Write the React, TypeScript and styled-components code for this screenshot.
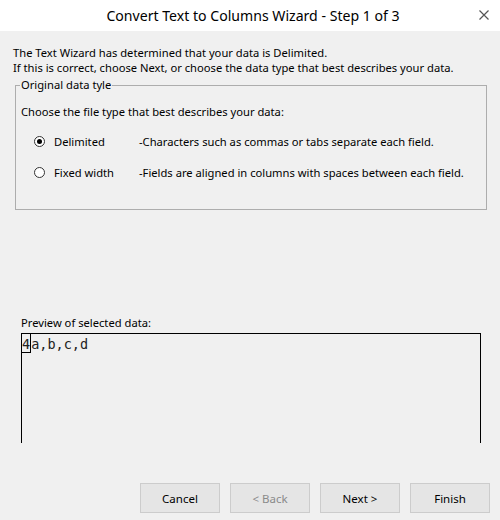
import React from 'react'
import styled, { createGlobalStyle } from 'styled-components'

const GlobalStyle = createGlobalStyle`
  body {
    margin: 0;
    background: #f0f0f0;
    font-family: 'Noto Sans', 'Open Sans', sans-serif;
  }
`

const Window = styled.div`
  width: 500px;
  height: 520px;
  display: flex;
  flex-direction: column;
  background: #f0f0f0;
  color: #000;
  font-size: 11.2px;
  overflow: hidden;
`

const TitleBar = styled.div`
  height: 31px;
  background: #fff;
  position: relative;
  display: flex;
  align-items: center;
  justify-content: center;
  padding-left: 6px;
  font-size: 14.1px;
  color: #000;
  .close {
    position: absolute;
    right: 11px;
    top: 10px;
    width: 10px;
    height: 10px;
  }
`

const Body = styled.div`
  flex: 1;
  display: flex;
  flex-direction: column;
  padding: 14px 0 0 13px;
  .intro {
    margin: 0;
    line-height: 15px;
    white-space: nowrap;
  }
`

const Group = styled.fieldset`
  margin: 3px 13px 0 2px;
  padding: 8px 5px 0 5px;
  height: 132px;
  box-sizing: border-box;
  border: 1px solid #adadad;
  legend {
    padding: 0 1px;
    margin-left: -1px;
    line-height: 14px;
  }
  .hint {
    margin: 4px 0 7px 0;
  }
`

const OptionRow = styled.label`
  display: flex;
  align-items: center;
  height: 31px;
  padding-left: 13px;
  white-space: nowrap;
  .name {
    width: 85px;
    margin-left: 9px;
  }
`

const Radio = styled.span<{ checked?: boolean }>`
  width: 11px;
  height: 11px;
  border-radius: 50%;
  border: 1px solid #333;
  background: #fff;
  box-sizing: border-box;
  display: flex;
  align-items: center;
  justify-content: center;
  &::after {
    content: '';
    width: 5px;
    height: 5px;
    border-radius: 50%;
    background: ${p => (p.checked ? '#000' : 'transparent')};
  }
`

const PreviewLabel = styled.div`
  margin: 105px 0 3px 8px;
`

const PreviewBox = styled.div`
  margin-left: 8px;
  width: 460px;
  height: 110px;
  box-sizing: border-box;
  border: 1px solid #000;
  border-bottom: none;
  font-family: 'DejaVu Sans Mono', 'Liberation Mono', monospace;
  font-size: 13.5px;
  line-height: 19px;
  color: #222;
  .cursor {
    display: inline-block;
    border: 1px solid #000;
    border-top: none;
    border-left: none;
    height: 19px;
    box-sizing: border-box;
    line-height: 20px;
  }
`

const Footer = styled.div`
  display: flex;
  justify-content: flex-end;
  gap: 10px;
  padding: 40px 10px 7px 0;
`

const Button = styled.button<{ disabled?: boolean }>`
  width: 80px;
  height: 30px;
  background: #e5e5e5;
  border: 1px solid #cccccc;
  font-family: inherit;
  font-size: 11.5px;
  color: ${p => (p.disabled ? '#8a8a8a' : '#000')};
  padding: 0;
`

const App = () => {
  return (
    <Window>
      <GlobalStyle />
      <TitleBar>
        Convert Text to Columns Wizard - Step 1 of 3
        <svg className="close" viewBox="0 0 10 10">
          <path d="M0.5 0.5 L9.5 9.5 M9.5 0.5 L0.5 9.5" stroke="#555" strokeWidth="1.2" />
        </svg>
      </TitleBar>
      <Body>
        <p className="intro">The Text Wizard has determined that your data is Delimited.</p>
        <p className="intro">If this is correct, choose Next, or choose the data type that best describes your data.</p>
        <Group>
          <legend>Original data tyle</legend>
          <p className="hint">Choose the file type that best describes your data:</p>
          <OptionRow>
            <Radio checked />
            <span className="name">Delimited</span>
            <span>-Characters such as commas or tabs separate each field.</span>
          </OptionRow>
          <OptionRow>
            <Radio />
            <span className="name">Fixed width</span>
            <span>-Fields are aligned in columns with spaces between each field.</span>
          </OptionRow>
        </Group>
        <PreviewLabel>Preview of selected data:</PreviewLabel>
        <PreviewBox>
          <span className="cursor">4</span>a,b,c,d
        </PreviewBox>
      </Body>
      <Footer>
        <Button>Cancel</Button>
        <Button disabled>&lt; Back</Button>
        <Button>Next &gt;</Button>
        <Button>Finish</Button>
      </Footer>
    </Window>
  )
}

export default App
